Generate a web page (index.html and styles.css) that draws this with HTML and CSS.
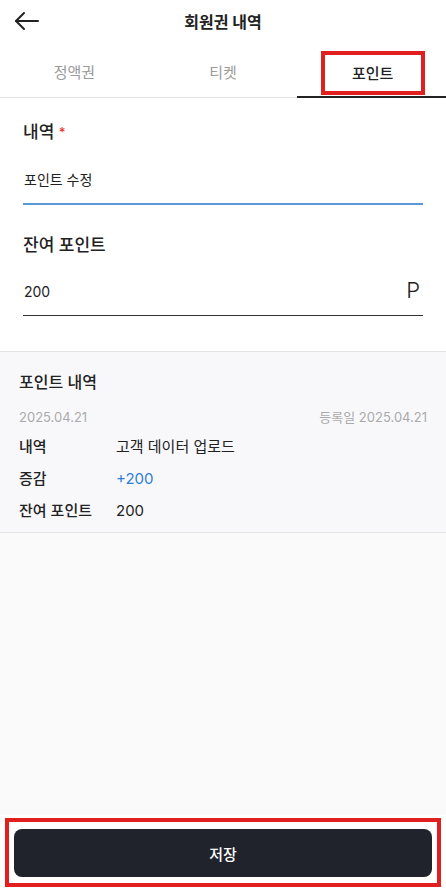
FILE: index.html
```html
<!DOCTYPE html>
<html lang="ko">
<head>
    <meta charset="UTF-8">
    <meta name="viewport" content="width=device-width, initial-scale=1.0">
    <title>회원권 내역</title>
    <link rel="stylesheet" href="styles.css">
</head>
<body>
    <div class="page">
        <header class="topbar">
            <button class="back" type="button" aria-label="뒤로">
                <svg width="26" height="20" viewBox="0 0 26 20" fill="none" stroke="#222" stroke-width="2" stroke-linecap="round" stroke-linejoin="round">
                    <path d="M24 10H2"/>
                    <path d="M10 2L2 10l8 8"/>
                </svg>
            </button>
            <h1>회원권 내역</h1>
        </header>

        <nav class="tabs">
            <div class="tab">정액권</div>
            <div class="tab">티켓</div>
            <div class="tab active"><span class="mark">포인트</span></div>
        </nav>

        <form class="form">
            <label class="label" for="memo">내역 <span class="req">*</span></label>
            <input class="field focus" id="memo" type="text" value="포인트 수정">

            <label class="label" for="balance">잔여 포인트</label>
            <div class="field-wrap">
                <input class="field" id="balance" type="text" value="200">
                <span class="unit">P</span>
            </div>
        </form>

        <section class="history">
            <h2>포인트 내역</h2>
            <div class="dates">
                <span>2025.04.21</span>
                <span>등록일 2025.04.21</span>
            </div>
            <dl class="rows">
                <dt>내역</dt>
                <dd>고객 데이터 업로드</dd>
                <dt>증감</dt>
                <dd class="plus">+200</dd>
                <dt>잔여 포인트</dt>
                <dd>200</dd>
            </dl>
        </section>

        <div class="spacer"></div>

        <footer class="bottom">
            <div class="mark-box">
                <button class="save" type="button">저장</button>
            </div>
        </footer>
    </div>
</body>
</html>
```

FILE: styles.css
```css
* {
    box-sizing: border-box;
}
body {
    margin: 0;
    font-family: Inter, "Noto Sans CJK KR", sans-serif;
    color: #222;
    background-color: #fff;
}
.page {
    display: flex;
    flex-direction: column;
    height: 890px;
}
.topbar {
    position: relative;
    height: 44px;
    display: flex;
    align-items: center;
    justify-content: center;
}
.topbar h1 {
    margin: 0;
    font-size: 16px;
    font-weight: 700;
    line-height: 1;
}
.back {
    position: absolute;
    left: 14px;
    top: 11px;
    padding: 0;
    border: none;
    background: none;
    line-height: 0;
}
.tabs {
    display: flex;
    height: 54px;
    border-bottom: 1px solid #e2e2e2;
}
.tab {
    flex: 1;
    display: flex;
    align-items: center;
    justify-content: center;
    font-size: 15px;
    color: #9a9a9a;
    margin-bottom: -1px;
}
.tab.active {
    color: #222;
    font-weight: 500;
    border-bottom: 2px solid #222;
    padding-top: 5px;
}
.mark {
    width: 104px;
    height: 44px;
    margin-left: 2px;
    display: flex;
    align-items: center;
    justify-content: center;
    border: 4px solid #e21f1f;
}
.form {
    display: flex;
    flex-direction: column;
    padding: 22px 23px 35px;
    border-bottom: 1px solid #e4e4e4;
}
.label {
    font-size: 17px;
    font-weight: 500;
    line-height: 24px;
}
.req {
    color: #e53935;
    font-size: 13px;
    vertical-align: top;
}
.field {
    width: 100%;
    height: 48px;
    margin-top: 13px;
    padding: 0 1px 2px;
    border: none;
    border-bottom: 1px solid #333;
    font-family: inherit;
    font-size: 14px;
    color: #222;
    background: none;
    outline: none;
}
.field.focus {
    border-bottom: 2px solid #5b9bd5;
    margin-bottom: 28px;
}
.field-wrap {
    position: relative;
}
.field-wrap .field {
    height: 47px;
    margin-top: 12px;
}
.unit {
    position: absolute;
    right: 3px;
    top: 22px;
    font-size: 22px;
    font-weight: 300;
    line-height: 1;
}
.history {
    background-color: #f8f8fa;
    padding: 18px 19px 10px;
    border-bottom: 1px solid #e2e2e2;
}
.history h2 {
    margin: 0;
    font-size: 16px;
    font-weight: 500;
    line-height: 24px;
}
.dates {
    display: flex;
    justify-content: space-between;
    margin-top: 13px;
    font-size: 13px;
    color: #aaa;
    line-height: 20px;
}
.rows {
    display: grid;
    grid-template-columns: 97px 1fr;
    row-gap: 10px;
    margin: 9px 0 0;
    font-size: 15px;
    line-height: 22px;
}
.rows dt {
    font-weight: 500;
}
.rows dd {
    margin: 0;
}
.rows .plus {
    color: #2f7fd6;
}
.spacer {
    flex: 1;
    background-color: #fafafa;
}
.bottom {
    height: 75px;
    padding: 3px 5px 3px;
    background-color: #fff;
}
.mark-box {
    height: 69px;
    border: 4px solid #e21f1f;
    padding: 7px 5px;
}
.save {
    width: 100%;
    height: 48px;
    border: none;
    border-radius: 8px;
    background-color: #20232b;
    color: #fff;
    font-family: inherit;
    font-size: 15px;
    font-weight: 500;
}
```
